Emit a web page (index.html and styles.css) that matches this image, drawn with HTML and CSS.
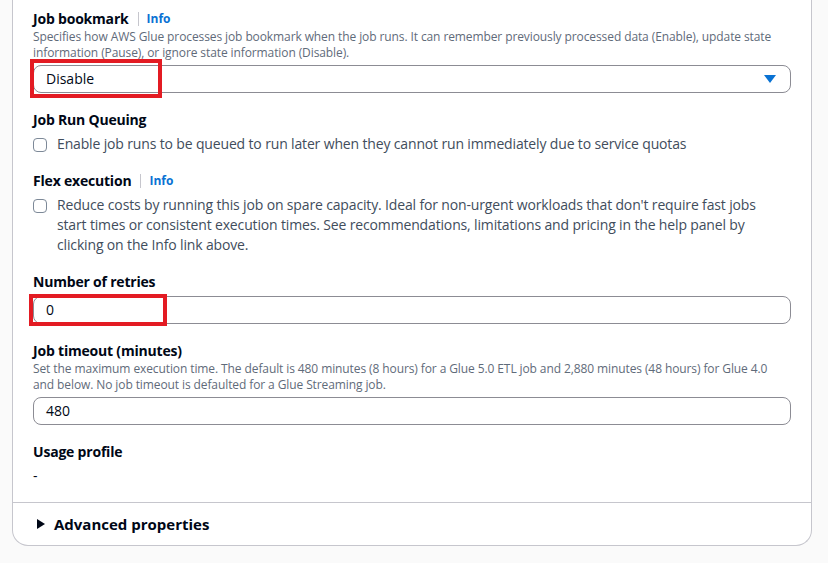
FILE: index.html
```html
<!DOCTYPE html>
<html lang="en">
<head>
<meta charset="utf-8">
<title>Job details</title>
<link rel="stylesheet" href="styles.css">
</head>
<body>
<div class="page">
  <div class="card">
    <div class="fields">
      <div class="field">
        <div class="label-row">
          <span class="label">Job bookmark</span>
          <span class="sep"></span>
          <a class="info">Info</a>
        </div>
        <div class="desc">Specifies how AWS Glue processes job bookmark when the job runs. It can remember previously processed data (Enable), update state information (Pause), or ignore state information (Disable).</div>
        <div class="control select">
          <span class="value">Disable</span>
          <svg class="caret" width="12" height="8" viewBox="0 0 12 8"><path d="M0 0 H12 L6 8 Z" fill="#0972d3"/></svg>
        </div>
      </div>

      <div class="field">
        <div class="label-row"><span class="label">Job Run Queuing</span></div>
        <label class="check">
          <span class="box"></span>
          <span class="check-text">Enable job runs to be queued to run later when they cannot run immediately due to service quotas</span>
        </label>
      </div>

      <div class="field">
        <div class="label-row">
          <span class="label">Flex execution</span>
          <span class="sep"></span>
          <a class="info">Info</a>
        </div>
        <label class="check">
          <span class="box"></span>
          <span class="check-text">Reduce costs by running this job on spare capacity. Ideal for non-urgent workloads that don't require fast jobs start times or consistent execution times. See recommendations, limitations and pricing in the help panel by clicking on the Info link above.</span>
        </label>
      </div>

      <div class="field">
        <div class="label-row"><span class="label">Number of retries</span></div>
        <div class="control"><span class="value">0</span></div>
      </div>

      <div class="field">
        <div class="label-row"><span class="label">Job timeout (minutes)</span></div>
        <div class="desc">Set the maximum execution time. The default is 480 minutes (8 hours) for a Glue 5.0 ETL job and 2,880 minutes (48 hours) for Glue 4.0 and below. No job timeout is defaulted for a Glue Streaming job.</div>
        <div class="control"><span class="value">480</span></div>
      </div>

      <div class="field">
        <div class="label-row"><span class="label">Usage profile</span></div>
        <div class="plain">-</div>
      </div>
    </div>

    <div class="expander">
      <svg class="expand-caret" width="8" height="10" viewBox="0 0 8 10"><path d="M0 0 L8 5 L0 10 Z" fill="#000716"/></svg>
      <span class="expander-title">Advanced properties</span>
    </div>
  </div>

  <div class="mark mark-bookmark"></div>
  <div class="mark mark-retries"></div>
</div>
</body>
</html>
```

FILE: styles.css
```css
* { box-sizing: border-box; }

html, body {
  margin: 0;
  padding: 0;
  background: #fafafa;
  font-family: "Open Sans", "Noto Sans", Arial, sans-serif;
  color: #000716;
}

.page {
  position: relative;
  width: 828px;
  height: 563px;
  overflow: hidden;
}

.card {
  margin-left: 12px;
  width: 800px;
  background: #ffffff;
  border: 1px solid #c6c6cd;
  border-top: none;
  border-radius: 0 0 16px 16px;
}

.fields {
  display: flex;
  flex-direction: column;
  gap: 17px;
  padding: 9px 20px 16px 20px;
  border-bottom: 1px solid #c6c6cd;
}

.field {
  display: flex;
  flex-direction: column;
}

.label-row {
  display: flex;
  align-items: center;
  height: 20px;
}

.label {
  font-size: 14px;
  font-weight: 700;
  line-height: 20px;
  letter-spacing: -0.2px;
  color: #000716;
}

.sep {
  width: 1px;
  height: 14px;
  background: #c6c6cd;
  margin: 0 8px 0 9px;
}

.info {
  font-size: 12px;
  font-weight: 700;
  color: #0972d3;
  line-height: 20px;
}

.desc {
  font-size: 12px;
  line-height: 16px;
  letter-spacing: -0.1px;
  color: #5f6b7a;
  padding-right: 8px;
}

.control {
  margin-top: 4px;
  height: 28px;
  border: 1px solid #8c8c94;
  border-radius: 8px;
  display: flex;
  align-items: center;
  padding: 0 14px 0 12px;
  background: #fff;
}

.select {
  justify-content: space-between;
}

.value {
  font-size: 14px;
  line-height: 20px;
  color: #000716;
}

.caret { display: block; }

.check {
  margin-top: 4px;
  display: flex;
  align-items: flex-start;
  gap: 10px;
}

.box {
  flex: 0 0 auto;
  width: 14px;
  height: 14px;
  margin-top: 4px;
  border: 1.5px solid #7d8998;
  border-radius: 4px;
  background: #fff;
}

.check-text {
  font-size: 14px;
  line-height: 20px;
  letter-spacing: -0.15px;
  color: #414d5c;
  padding-right: 6px;
}

.plain {
  margin-top: 4px;
  font-size: 14px;
  line-height: 20px;
  color: #000716;
}

.expander {
  height: 42px;
  display: flex;
  align-items: center;
  padding-left: 24px;
  gap: 9px;
}

.expand-caret { display: block; }

.expander-title {
  font-size: 15px;
  font-weight: 700;
  line-height: 20px;
  color: #000716;
}

.mark {
  position: absolute;
  border: 4px solid #e31b23;
}

.mark-bookmark {
  left: 30px;
  top: 59px;
  width: 132px;
  height: 39px;
}

.mark-retries {
  left: 29px;
  top: 294px;
  width: 138px;
  height: 32px;
}
```
